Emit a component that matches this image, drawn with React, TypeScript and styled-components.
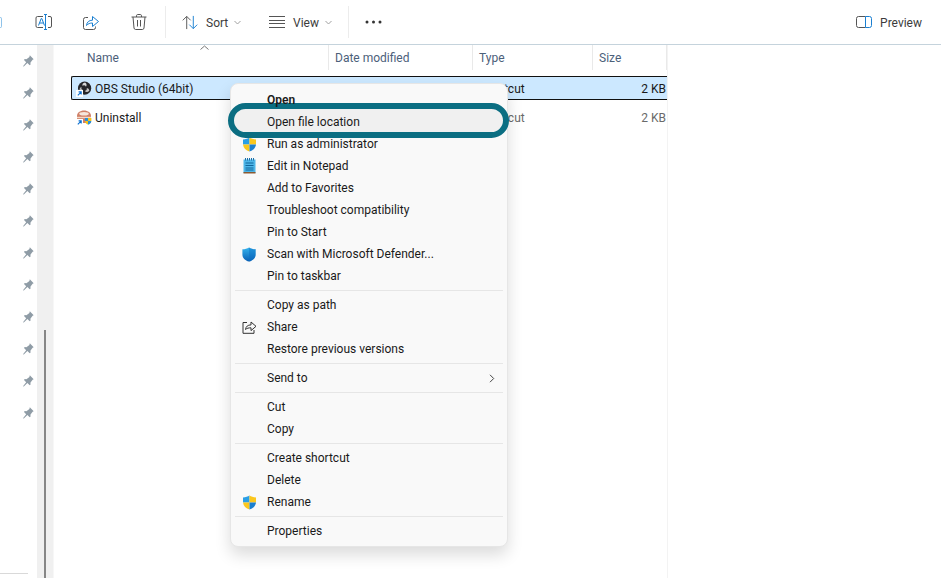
import React from 'react';
import styled, { createGlobalStyle } from 'styled-components';

const GlobalStyle = createGlobalStyle`
  html, body, #root {
    margin: 0;
    padding: 0;
    height: 100%;
  }
  body {
    background: #fff;
    font-family: Roboto, 'Noto Sans', sans-serif;
    font-size: 12px;
    color: #1a1a1a;
    overflow: hidden;
  }
`;

const Page = styled.div`
  display: flex;
  flex-direction: column;
  width: 941px;
  height: 578px;
  overflow: hidden;
`;

const Toolbar = styled.div`
  display: flex;
  align-items: center;
  flex: 0 0 44px;
  border-bottom: 1px solid #c5d3dc;
  box-sizing: content-box;
  color: #3c3c3c;
`;

const ClippedIcon = styled.div`
  width: 19px;
  height: 16px;
  display: flex;
`;

const ClippedEdge = styled.span`
  width: 2px;
  height: 11px;
  margin-top: 3px;
  border: 1px solid #8fc3ea;
  border-left: 0;
  border-radius: 0 2px 2px 0;
  box-sizing: border-box;
`;

const IconButton = styled.div`
  width: 48px;
  display: flex;
  justify-content: center;
`;

const ToolSeparator = styled.div<{ $right: number; $left: number }>`
  width: 1px;
  height: 32px;
  margin: 0 ${(p) => p.$right}px 0 ${(p) => p.$left}px;
  background: #ececec;
`;

const MenuButton = styled.div<{ $width: number }>`
  display: flex;
  align-items: center;
  width: ${(p) => p.$width}px;
`;

const ToolLabel = styled.span`
  margin-left: 8px;
  padding-top: 1px;
`;

const SmallChevron = styled.svg`
  margin-left: 6px;
`;

const Spacer = styled.div`
  flex: 1;
`;

const PreviewButton = styled.div`
  display: flex;
  align-items: center;
  margin-right: 19px;
`;

const Body = styled.div`
  display: flex;
  flex: 1;
  min-height: 0;
`;

const Sidebar = styled.div`
  display: flex;
  flex-direction: column;
  width: 37px;
`;

const PinList = styled.div`
  display: flex;
  flex-direction: column;
  align-items: flex-end;
  gap: 20px;
  padding: 10px 3px 0 0;
`;

const SidebarRule = styled.div`
  width: 28px;
  height: 1px;
  margin-top: auto;
  margin-bottom: 4px;
  background: #d9d9d9;
`;

const ScrollTrack = styled.div`
  display: flex;
  justify-content: center;
  width: 16px;
  padding-top: 285px;
  background: #f0f0f0;
  box-sizing: border-box;
  margin-right: 2px;
  box-shadow: 1px 0 0 #f7f7f7;
`;

const ScrollThumb = styled.div`
  width: 2px;
  height: 100%;
  background: #868686;
`;

const Files = styled.div`
  position: relative;
  width: 612px;
  border-right: 1px solid #f3f3f3;
  box-sizing: content-box;
`;

const HeaderRow = styled.div`
  position: relative;
  display: grid;
  grid-template-columns: 274px 144px 120px 74px;
  height: 25px;
  margin-bottom: 6px;
`;

const HeaderCell = styled.div<{ $pad: number }>`
  display: flex;
  align-items: center;
  padding-left: ${(p) => p.$pad}px;
  border-right: 1px solid #e9e9e9;
  color: #4c607a;
  &:last-child {
    border-right: 0;
  }
`;

const SortCaret = styled.svg`
  position: absolute;
  left: 145px;
  top: 0;
`;

const FileRow = styled.div<{ $selected?: boolean }>`
  display: grid;
  grid-template-columns: 258px 144px 120px 73px;
  align-items: center;
  width: 596px;
  height: 24px;
  padding-top: 1px;
  margin: 0 0 ${(p) => (p.$selected ? 5 : 0)}px 16px;
  background: ${(p) => (p.$selected ? '#cce8ff' : 'transparent')};
  border: 1px solid ${(p) => (p.$selected ? '#101010' : 'transparent')};
  border-right: 0;
  border-radius: 2px 0 0 2px;
  box-sizing: border-box;
  color: ${(p) => (p.$selected ? '#1a1a1a' : '#6a6a6a')};
`;

const FileName = styled.div`
  display: flex;
  align-items: center;
  gap: 3px;
  padding-left: 4px;
  color: #1a1a1a;
`;

const FileType = styled.div`
  padding-left: 5px;
`;

const FileSize = styled.div`
  text-align: right;
  padding-right: 1px;
`;

const ContextMenu = styled.div`
  position: absolute;
  left: 175px;
  top: 38px;
  width: 278px;
  padding: 5px 4px 4px;
  background: #f9f9f9;
  border: 1px solid #e6e6e6;
  border-radius: 8px;
  box-shadow: 0 8px 16px rgba(0, 0, 0, 0.14);
  box-sizing: border-box;
`;

const MenuItem = styled.div<{ $bold?: boolean }>`
  position: relative;
  display: flex;
  align-items: center;
  height: 22px;
  font-weight: ${(p) => (p.$bold ? 600 : 400)};
`;

const ItemIcon = styled.div`
  display: flex;
  justify-content: center;
  width: 28px;
  margin-right: 4px;
`;

const ItemLabel = styled.span`
  position: relative;
  z-index: 2;
`;

const Highlight = styled.div`
  position: absolute;
  left: -7px;
  right: -6px;
  top: -8px;
  bottom: -5px;
  z-index: 1;
  background: #f0f0f0;
  border: 6px solid #0b6e82;
  border-radius: 18px;
  box-sizing: border-box;
`;

const ItemArrow = styled.svg`
  position: absolute;
  right: 8px;
  top: 7px;
`;

const MenuRule = styled.div`
  height: 1px;
  margin: 3px 0;
  background: #e6e6e6;
`;

const RenameIcon = () => (
  <svg width="17" height="16" viewBox="0 0 17 16" fill="none">
    <path d="M8 2.5H2.5A1.5 1.5 0 0 0 1 4v8a1.5 1.5 0 0 0 1.5 1.5H8M13 2.5h2A1.5 1.5 0 0 1 16.5 4v8a1.5 1.5 0 0 1-1.5 1.5h-2" stroke="#555" />
    <path d="M9 .5h3M9 15.5h3M10.5.5v15" stroke="#1a7fd1" />
    <path d="M3.5 11.5l2.700-7h.6l2.700 7M4.500 9h4" stroke="#1a7fd1" />
  </svg>
);

const ShareIcon = () => (
  <svg width="16" height="15" viewBox="0 0 16 15" fill="none">
    <path d="M5 2.5H2.5a2 2 0 0 0-2 2v8a2 2 0 0 0 2 2h8a2 2 0 0 0 2-2v-1" stroke="#555" />
    <path d="M3.5 10.5c.3-3.500 2.600-5.300 6-5.300V1.500l6 5-6 5V8c-2.500 0-4.500.7-6 2.500z" stroke="#1a7fd1" strokeLinejoin="round" />
  </svg>
);

const TrashIcon = () => (
  <svg width="16" height="16" viewBox="0 0 16 16" fill="none" stroke="#555">
    <path d="M.5 3h15M5.5 3V1.7C5.5 1 6 .5 6.7.5h2.600c.7 0 1.200.5 1.200 1.200V3" />
    <path d="M2 3l1 11c.1.9.7 1.500 1.600 1.500h6.800c.9 0 1.500-.6 1.600-1.500L14 3" />
    <path d="M6.500 6v6.500M9.500 6v6.500" />
  </svg>
);

const SortIcon = () => (
  <svg width="16" height="15" viewBox="0 0 17 15" fill="none">
    <path d="M5 14.500V1M.8 5.200L5 1l4.200 4.200" stroke="#555" />
    <path d="M12 .5V14M7.800 9.800L12 14l4.200-4.200" stroke="#1a7fd1" />
  </svg>
);

const ViewIcon = () => (
  <svg width="16" height="12" viewBox="0 0 16 12" fill="none" stroke="#555">
    <path d="M0 .5h16M0 4.500h16M0 7.500h16M0 11.500h16" />
  </svg>
);

const DotsIcon = () => (
  <svg width="17" height="4" viewBox="0 0 17 4" fill="#333">
    <circle cx="2" cy="2" r="1.500" />
    <circle cx="8.500" cy="2" r="1.500" />
    <circle cx="15" cy="2" r="1.500" />
  </svg>
);

const PreviewIcon = () => (
  <svg width="16" height="12" viewBox="0 0 16 12" fill="none">
    <path d="M9.500.5h-7a2 2 0 0 0-2 2v7a2 2 0 0 0 2 2h7" stroke="#555" />
    <path d="M9.500.5h4a2 2 0 0 1 2 2v7a2 2 0 0 1-2 2h-4z" stroke="#1a7fd1" />
  </svg>
);

const PinIcon = () => (
  <svg width="11" height="12" viewBox="0 0 11 12" fill="#8f9ca6">
    <path d="M6.800.3l3.900 3.900-1.100.5-2.200 3.100.2 1.700-.9.7-2.300-2.300L.8 11.400 0 11.200l3.200-3.900L1 5l.7-.9 1.700.2 3-2.300z" />
  </svg>
);

const ShortcutBadge = () => (
  <>
    <rect x="0" y="9" width="7" height="7" fill="#fff" />
    <path d="M1.800 14.400l3-3M2.600 10.900h2.600v2.600" stroke="#0a6fd0" strokeWidth="1.100" fill="none" />
  </>
);

const ObsIcon = () => (
  <svg width="16" height="16" viewBox="0 0 16 16">
    <circle cx="8.600" cy="7.200" r="6.600" fill="#26262a" />
    <path d="M9 1.400a3 3 0 0 1 1 4.400 2.600 2.600 0 0 0-3.600-1A3.200 3.200 0 0 1 9 1.400z" fill="#d8d8d8" />
    <path d="M13.400 9.600a3 3 0 0 1-4.600.4 2.600 2.600 0 0 0 2-3 3.200 3.200 0 0 1 2.600 2.600z" fill="#c8c8c8" />
    <path d="M4 10.200a3 3 0 0 1 1.600-4.400 2.600 2.600 0 0 0 1.600 3.400A3.200 3.200 0 0 1 4 10.200z" fill="#b8b8b8" />
    <ShortcutBadge />
  </svg>
);

const UninstallIcon = () => (
  <svg width="16" height="16" viewBox="0 0 16 16">
    <path d="M1 13V6c0-3.200 3-5.500 7-5.500S15 2.800 15 6v7z" fill="#d08068" />
    <ellipse cx="8" cy="3.800" rx="4.800" ry="1.800" fill="#f6e7dc" />
    <path d="M1 6.800h14v1.400H1z" fill="#f3d9c8" />
    <path d="M9 8h3v3H9z" fill="#2a90d8" />
    <path d="M12 8h3.400v3H12z" fill="#f6c21c" />
    <path d="M9 11h3v3.600c-1.400-.2-2.600-1.400-3-3.600z" fill="#f6c21c" />
    <path d="M12 11h3.400c-.3 2.200-1.700 3.400-3.400 3.800z" fill="#2a90d8" />
    <ShortcutBadge />
  </svg>
);

const UacShield = () => (
  <svg width="15" height="15" viewBox="0 0 15 15">
    <path d="M7.500.6C5.800 1.800 3.700 2.400 1 2.500v5h6.500z" fill="#2a9fe6" />
    <path d="M7.500.6c1.700 1.200 3.800 1.800 6.500 1.900v5H7.500z" fill="#fbc71e" />
    <path d="M1 7.500h6.500v7C4 13.400 1.400 11 1 7.500z" fill="#fbc71e" />
    <path d="M14 7.500H7.500v7c3.500-1.100 6.100-3.500 6.500-7z" fill="#1c7fcf" />
  </svg>
);

const NotepadIcon = () => (
  <svg width="13" height="16" viewBox="0 0 13 16">
    <path d="M.5 1.500h12V15H.5z" fill="#4db6e8" />
    <path d="M.5 14h12v1.500H.5z" fill="#8a5a34" />
    <path d="M2.500 0v2.500M4.500 0v2.500M6.500 0v2.500M8.500 0v2.500M10.500 0v2.500" stroke="#1c6fa8" />
    <path d="M2.500 5h8M2.500 7.500h8M2.500 10h8M2.500 12h8" stroke="#10669c" />
  </svg>
);

const DefenderIcon = () => (
  <svg width="14" height="15" viewBox="0 0 14 15">
    <defs>
      <linearGradient id="defender" x1="0" y1="0" x2="0" y2="1">
        <stop offset="0" stopColor="#35b4ee" />
        <stop offset="1" stopColor="#0a5fb4" />
      </linearGradient>
    </defs>
    <path d="M7 .4C5.200 1.600 3 2.200.4 2.200v5.200c0 3.400 2.600 5.900 6.600 7.200 4-1.300 6.600-3.800 6.600-7.200V2.200C11 2.200 8.800 1.600 7 .4z" fill="url(#defender)" />
    <path d="M7 .4v14.200c4-1.300 6.600-3.800 6.600-7.200V2.200C11 2.200 8.800 1.600 7 .4z" fill="#0c6fc4" opacity="0.45" />
  </svg>
);

const MenuShareIcon = () => (
  <svg width="15" height="14" viewBox="0 0 15 14" fill="none" stroke="#333">
    <path d="M5 2.500H1v10.800h11V10" />
    <path d="M3.500 9.500c.4-3 2.200-4.600 5.500-4.600V2l5 4.300-5 4.300V7.800c-2.400 0-4 .4-5.500 1.700z" strokeLinejoin="round" />
  </svg>
);

const Chevron = () => (
  <SmallChevron width="7" height="5" viewBox="0 0 7 5" fill="none" stroke="#a0a0a0">
    <path d="M.5 1l3 3 3-3" />
  </SmallChevron>
);

type MenuEntry =
  | 'rule'
  | { label: string; icon?: React.ReactNode; bold?: boolean; highlighted?: boolean; submenu?: boolean };

const menuEntries: MenuEntry[] = [
  { label: 'Open', bold: true },
  { label: 'Open file location', highlighted: true },
  { label: 'Run as administrator', icon: <UacShield /> },
  { label: 'Edit in Notepad', icon: <NotepadIcon /> },
  { label: 'Add to Favorites' },
  { label: 'Troubleshoot compatibility' },
  { label: 'Pin to Start' },
  { label: 'Scan with Microsoft Defender...', icon: <DefenderIcon /> },
  { label: 'Pin to taskbar' },
  'rule',
  { label: 'Copy as path' },
  { label: 'Share', icon: <MenuShareIcon /> },
  { label: 'Restore previous versions' },
  'rule',
  { label: 'Send to', submenu: true },
  'rule',
  { label: 'Cut' },
  { label: 'Copy' },
  'rule',
  { label: 'Create shortcut' },
  { label: 'Delete' },
  { label: 'Rename', icon: <UacShield /> },
  'rule',
  { label: 'Properties' },
];

const App: React.FC = () => {
  return (
    <>
      <GlobalStyle />
      <Page>
        <Toolbar>
          <ClippedIcon>
            <ClippedEdge />
          </ClippedIcon>
          <IconButton>
            <RenameIcon />
          </IconButton>
          <IconButton>
            <ShareIcon />
          </IconButton>
          <IconButton>
            <TrashIcon />
          </IconButton>
          <ToolSeparator $left={2} $right={16} />
          <MenuButton $width={87}>
            <SortIcon />
            <ToolLabel>Sort</ToolLabel>
            <Chevron />
          </MenuButton>
          <MenuButton $width={79}>
            <ViewIcon />
            <ToolLabel>View</ToolLabel>
            <Chevron />
          </MenuButton>
          <ToolSeparator $left={0} $right={16} />
          <DotsIcon />
          <Spacer />
          <PreviewButton>
            <PreviewIcon />
            <ToolLabel>Preview</ToolLabel>
          </PreviewButton>
        </Toolbar>
        <Body>
          <Sidebar>
            <PinList>
              {Array.from({ length: 12 }, (_, index) => (
                <PinIcon key={index} />
              ))}
            </PinList>
            <SidebarRule />
          </Sidebar>
          <ScrollTrack>
            <ScrollThumb />
          </ScrollTrack>
          <Files>
            <HeaderRow>
              <HeaderCell $pad={32}>Name</HeaderCell>
              <HeaderCell $pad={6}>Date modified</HeaderCell>
              <HeaderCell $pad={6}>Type</HeaderCell>
              <HeaderCell $pad={6}>Size</HeaderCell>
              <SortCaret width="9" height="5" viewBox="0 0 9 5" fill="none" stroke="#777">
                <path d="M.5 4.500l4-3.500 4 3.500" />
              </SortCaret>
            </HeaderRow>
            <FileRow $selected>
              <FileName>
                <ObsIcon />
                OBS Studio (64bit)
              </FileName>
              <span />
              <FileType>Shortcut</FileType>
              <FileSize>2 KB</FileSize>
            </FileRow>
            <FileRow>
              <FileName>
                <UninstallIcon />
                Uninstall
              </FileName>
              <span />
              <FileType>Shortcut</FileType>
              <FileSize>2 KB</FileSize>
            </FileRow>
            <ContextMenu>
              {menuEntries.map((entry, index) =>
                entry === 'rule' ? (
                  <MenuRule key={index} />
                ) : (
                  <MenuItem key={index} $bold={entry.bold}>
                    {entry.highlighted && <Highlight />}
                    <ItemIcon>{entry.icon}</ItemIcon>
                    <ItemLabel>{entry.label}</ItemLabel>
                    {entry.submenu && (
                      <ItemArrow width="6" height="9" viewBox="0 0 6 9" fill="none" stroke="#444">
                        <path d="M1 .8l3.700 3.700L1 8.200" />
                      </ItemArrow>
                    )}
                  </MenuItem>
                ),
              )}
            </ContextMenu>
          </Files>
        </Body>
      </Page>
    </>
  );
};

export default App;
